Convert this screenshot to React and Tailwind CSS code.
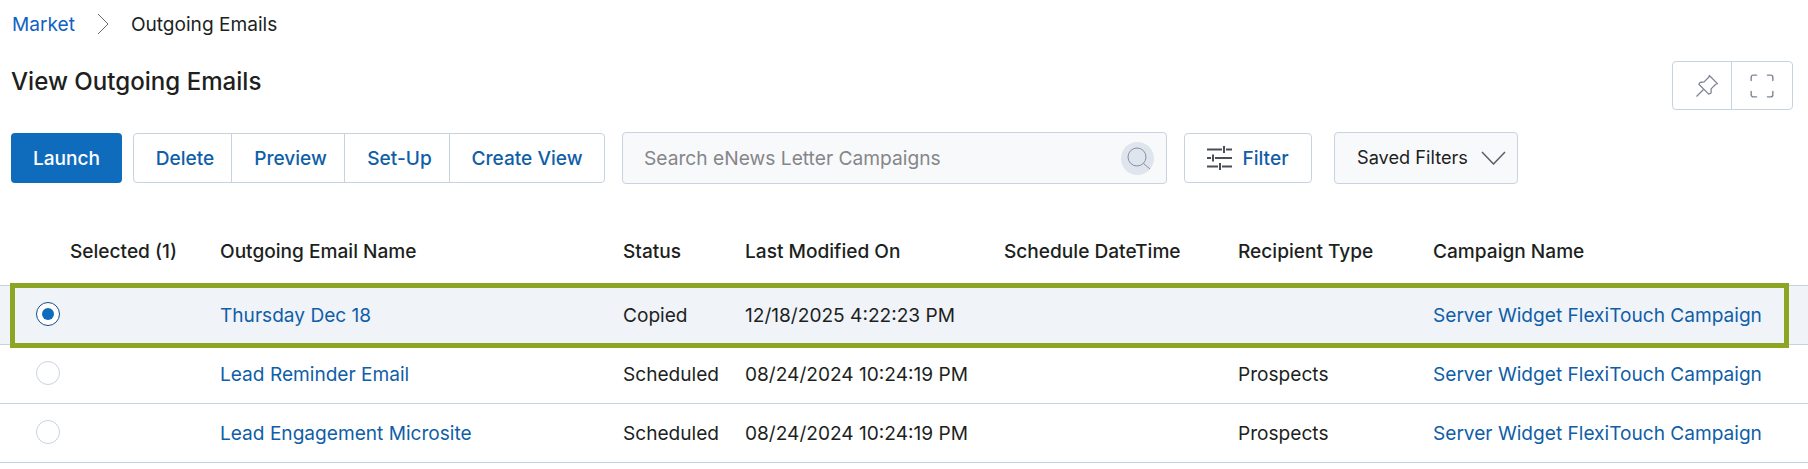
import React from "react";

const LINK = "text-[#0f5ea8]";
const rows = [
  { name: "Thursday Dec 18", status: "Copied", mod: "12/18/2025 4:22:23 PM", rec: "", selected: true },
  { name: "Lead Reminder Email", status: "Scheduled", mod: "08/24/2024 10:24:19 PM", rec: "Prospects" },
  { name: "Lead Engagement Microsite", status: "Scheduled", mod: "08/24/2024 10:24:19 PM", rec: "Prospects" },
];
const COLS = "grid grid-cols-[220px_403px_122px_259px_234px_195px_1fr] items-center";

function Radio({ on }) {
  return on ? (
    <span className="mb-[2px] flex h-6 w-6 items-center justify-center rounded-full border border-[#0d4f8b] bg-white">
      <span className="h-[12px] w-[12px] rounded-full bg-[#0f6cbd]" />
    </span>
  ) : (
    <span className="mb-[3px] block h-6 w-6 rounded-full border border-[#c8d3e2] bg-white" />
  );
}

export default function App() {
  return (
    <div className="relative h-[469px] w-full overflow-hidden bg-white font-['Inter',sans-serif] text-[19.1px] text-[#201f1e]">
      <nav className="flex h-[48px] items-center pl-3">
        <span className="text-[#0f62c4]">Market</span>
        <svg width="14" height="24" viewBox="0 0 14 24" className="ml-[21px] mr-[21px]" fill="none" stroke="#6b6b6b" strokeWidth="1">
          <path d="M2 2 L12 12 L2 22" />
        </svg>
        <span>Outgoing Emails</span>
      </nav>

      <div className="flex h-[84px] items-start justify-between pl-[11px] pr-[15px]">
        <h1 className="mt-[18px] text-[24.1px] font-medium leading-[32px]">View Outgoing Emails</h1>
        <div className="mt-[13px] flex h-[49px] w-[121px] rounded border border-[#c8d3e2]">
          <button className="flex w-[59px] items-center justify-center border-r border-[#c8d3e2] pl-[10px] text-[#7b8490]">
            <svg width="28" height="28" viewBox="0 0 24 24" fill="none" stroke="currentColor" strokeWidth="1.1" strokeLinejoin="round">
              <path d="M14 3 L21 10 L19.5 10.5 L15.5 14.5 L15.5 18 L13.5 19 L5 10.5 L6 9 L9.5 8.5 L13.5 4.5 Z" />
              <path d="M9 15 L3 21" />
            </svg>
          </button>
          <button className="flex flex-1 items-center justify-center text-[#7d8694]">
            <svg width="26" height="26" viewBox="0 0 24 24" fill="none" stroke="currentColor" strokeWidth="1.3" strokeLinecap="round">
              <path d="M2 7V4a2 2 0 0 1 2-2h3M17 2h3a2 2 0 0 1 2 2v3M22 17v3a2 2 0 0 1-2 2h-3M7 22H4a2 2 0 0 1-2-2v-3" />
            </svg>
          </button>
        </div>
      </div>

      <div className="flex items-center pl-[11px]">
        <button className="h-[50px] w-[111px] rounded bg-[#0f6cbd] font-medium text-white">Launch</button>
        <div className={`ml-[11px] flex h-[50px] w-[472px] rounded border border-[#c8d3e2] font-medium ${LINK}`}>
          <button className="w-[98px] border-r border-[#c8d3e2] pl-[5px]">Delete</button>
          <button className="w-[113px] border-r border-[#c8d3e2] pl-[5px]">Preview</button>
          <button className="w-[105px] border-r border-[#c8d3e2] pl-[5px]">Set-Up</button>
          <button className="flex-1">Create View</button>
        </div>
        <div className="ml-[17px] flex h-[52px] w-[545px] items-center justify-between rounded border border-[#c8d3e2] bg-[#f8f9fb] pl-[21px] pr-[12px]">
          <span className="text-[19.2px] text-[#85868a]">Search eNews Letter Campaigns</span>
          <span className="flex h-[33px] w-[33px] items-center justify-center rounded-full bg-[#dfe5ee]">
            <svg width="26" height="26" viewBox="0 0 26 26" fill="none" stroke="#8b9098" strokeWidth="1">
              <circle cx="12" cy="12" r="9" />
              <path d="M18.5 18.5 L25 24" />
            </svg>
          </span>
        </div>
        <button className={`ml-[17px] flex h-[50px] w-[128px] items-center justify-center gap-[9px] rounded border border-[#c8d3e2] font-medium ${LINK}`}>
          <svg width="26" height="26" viewBox="0 0 26 26" fill="none" stroke="#4a4f57" strokeWidth="2">
            <path d="M0 4.5H15M19 4.5h6M17 1v7M0 13h4M8 13h17M6 9.500v7M0 21.500H11M15 21.500h10M13 18v7" />
          </svg>
          Filter
        </button>
        <button className="ml-[22px] flex h-[52px] w-[184px] items-center gap-[13px] rounded border border-[#c8d3e2] bg-[#f8f9fb] pl-[22px] text-[18.200px]">
          Saved Filters
          <svg width="25" height="14" viewBox="0 0 25 14" fill="none" stroke="#5a5f66" strokeWidth="1.5">
            <path d="M1 1 L12.500 13 L24 1" />
          </svg>
        </button>
      </div>

      <div className={`${COLS} mt-[49px] h-[52px] pb-[15px] font-medium`}>
        <span className="pl-[70px]">Selected (1)</span>
        <span>Outgoing Email Name</span>
        <span>Status</span>
        <span>Last Modified On</span>
        <span>Schedule DateTime</span>
        <span>Recipient Type</span>
        <span>Campaign Name</span>
      </div>

      {rows.map((r) => (
        <div
          key={r.name}
          className={`${COLS} border-b border-[#c8d3e2] ${r.selected ? "h-[60px] border-t bg-[#f0f3f8]" : "h-[59px]"}`}
        >
          <span className="pl-[36px]"><Radio on={r.selected} /></span>
          <span className={LINK}>{r.name}</span>
          <span>{r.status}</span>
          <span className="col-span-2">{r.mod}</span>
          <span>{r.rec}</span>
          <span className={LINK}>Server Widget FlexiTouch Campaign</span>
        </div>
      ))}
      <div className="pointer-events-none absolute left-[10px] top-[283px] h-[65px] w-[1779px] border-[5px] border-[#8ca522]" />
    </div>
  );
}
